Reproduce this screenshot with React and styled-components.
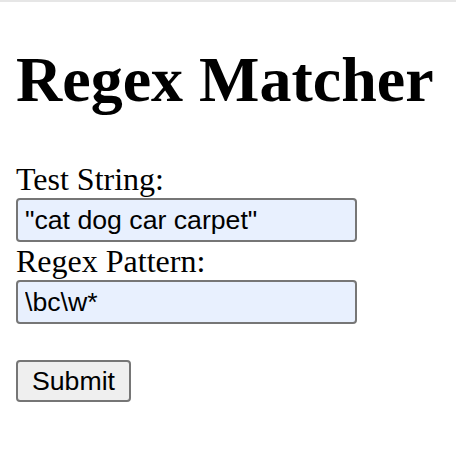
import styled, { createGlobalStyle } from "styled-components";

const GlobalStyle = createGlobalStyle`
    html {
        border-top: 2px solid #e6e6e6;
    }
    body {
        margin: 0;
        background: #ffffff;
        color: #000000;
        font-family: "Liberation Serif", "Times New Roman", serif;
    }
`

const Page = styled.div`
    display: flow-root;
    padding: 41px 16px 16px;
`

const Title = styled.h1`
    font-size: 64px;
    font-weight: bold;
    margin: 0 0 43px;
`

const Form = styled.form`
    display: flex;
    flex-direction: column;
    align-items: flex-start;
`

const Label = styled.label`
    font-size: 32px;
    line-height: 38px;
    height: 38px;
`

const Input = styled.input`
    box-sizing: border-box;
    width: 341px;
    height: 44px;
    padding: 0 7px;
    font-family: "Liberation Sans", Arial, sans-serif;
    font-size: 26.67px;
    color: #000000;
    background: #e8f0fe;
    border: 2px solid #767676;
    border-radius: 4px;
    outline: none;
`

const Button = styled.button`
    box-sizing: border-box;
    margin-top: 36px;
    height: 42px;
    padding: 0 14px;
    font-family: "Liberation Sans", Arial, sans-serif;
    font-size: 26.67px;
    color: #000000;
    background: #efefef;
    border: 2px solid #767676;
    border-radius: 4px;
    cursor: pointer;
`

function App() {
    const handleSubmit = (e) => {
        e.preventDefault();
    };

    return (
        <Page>
            <GlobalStyle />
            <Title>Regex Matcher</Title>
            <Form onSubmit={handleSubmit}>
                <Label htmlFor="test">Test String:</Label>
                <Input id="test" defaultValue={'"cat dog car carpet"'} />
                <Label htmlFor="pattern">Regex Pattern:</Label>
                <Input id="pattern" defaultValue={"\\bc\\w*"} />
                <Button type="submit">Submit</Button>
            </Form>
        </Page>
    );
}

export default App;
